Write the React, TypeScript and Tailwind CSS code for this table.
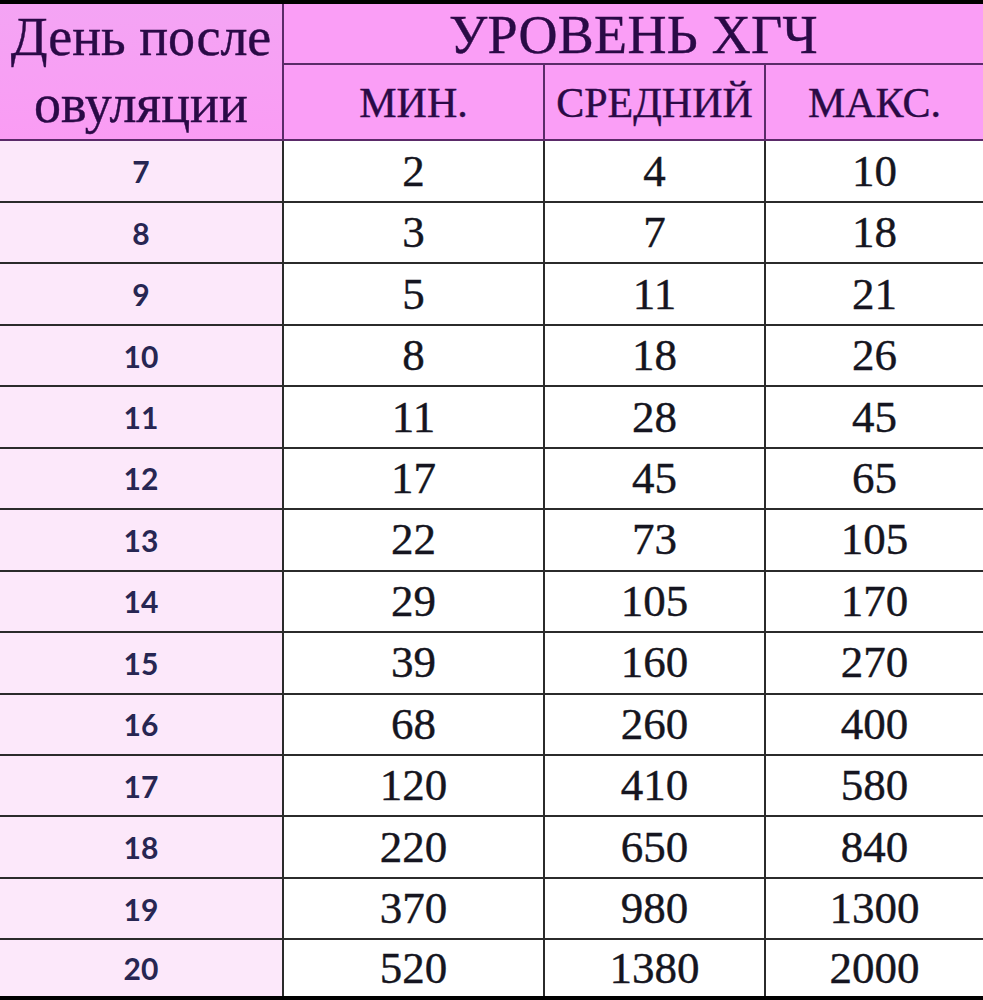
import React from "react";

const rows: [number, number, number, number][] = [
  [7, 2, 4, 10],
  [8, 3, 7, 18],
  [9, 5, 11, 21],
  [10, 8, 18, 26],
  [11, 11, 28, 45],
  [12, 17, 45, 65],
  [13, 22, 73, 105],
  [14, 29, 105, 170],
  [15, 39, 160, 270],
  [16, 68, 260, 400],
  [17, 120, 410, 580],
  [18, 220, 650, 840],
  [19, 370, 980, 1300],
  [20, 520, 1380, 2000],
];

const serif = "font-['Liberation_Serif','Times_New_Roman',serif]";

export default function App() {
  return (
    <div className="w-[983px] h-[1000px] bg-black pt-[4px] pb-[4px] flex flex-col overflow-hidden">
      {/* Header */}
      <div
        className={`grid grid-cols-[282px_259px_219px_1fr] grid-rows-[59px_74px] gap-[2px] pb-[2px] bg-[#5a2a68] ${serif} text-[#2a0a46] [-webkit-text-stroke:0.4px_#2a0a46]`}
      >
        <div className="row-span-2 bg-gradient-to-b from-[#f4a4f4] to-[#fa9cf4] flex flex-col">
          <div className="flex-1 flex items-center justify-center text-[54px] leading-none pb-[2px]">
            День после
          </div>
          <div className="flex-1 flex items-center justify-center text-[54px] leading-none pb-[2px]">
            овуляции
          </div>
        </div>
        <div className="col-span-3 bg-[#fa9ef6] flex items-center justify-center text-[54px] leading-none pt-[2px] tracking-[0.3px]">
          УРОВЕНЬ ХГЧ
        </div>
        <div className="bg-[#fa9ef6] flex items-center justify-center text-[42px] leading-none pt-[2px]">
          МИН.
        </div>
        <div className="bg-[#fa9ef6] flex items-center justify-center text-[42px] leading-none pt-[2px]">
          СРЕДНИЙ
        </div>
        <div className="bg-[#fa9ef6] flex items-center justify-center text-[42px] leading-none pt-[2px]">
          МАКС.
        </div>
      </div>

      {/* Body */}
      <div className="flex-1 grid grid-cols-[282px_259px_219px_1fr] grid-rows-[60px_repeat(12,59.44px)_1fr] gap-[2px] bg-[#2b2b2b]">
        {rows.map(([day, min, avg, max]) => (
          <React.Fragment key={day}>
            <div className="bg-[#fce8fa] flex items-center justify-center font-['Lato','Open_Sans',sans-serif] font-bold text-[30px] leading-none text-[#272652]">
              {day}
            </div>
            <div className={`bg-white flex items-center justify-center ${serif} text-[45px] leading-none text-[#151520] [-webkit-text-stroke:0.4px_#151520]`}>
              {min}
            </div>
            <div className={`bg-white flex items-center justify-center ${serif} text-[45px] leading-none text-[#151520] [-webkit-text-stroke:0.4px_#151520]`}>
              {avg}
            </div>
            <div className={`bg-white flex items-center justify-center ${serif} text-[45px] leading-none text-[#151520] [-webkit-text-stroke:0.4px_#151520]`}>
              {max}
            </div>
          </React.Fragment>
        ))}
      </div>
    </div>
  );
}
